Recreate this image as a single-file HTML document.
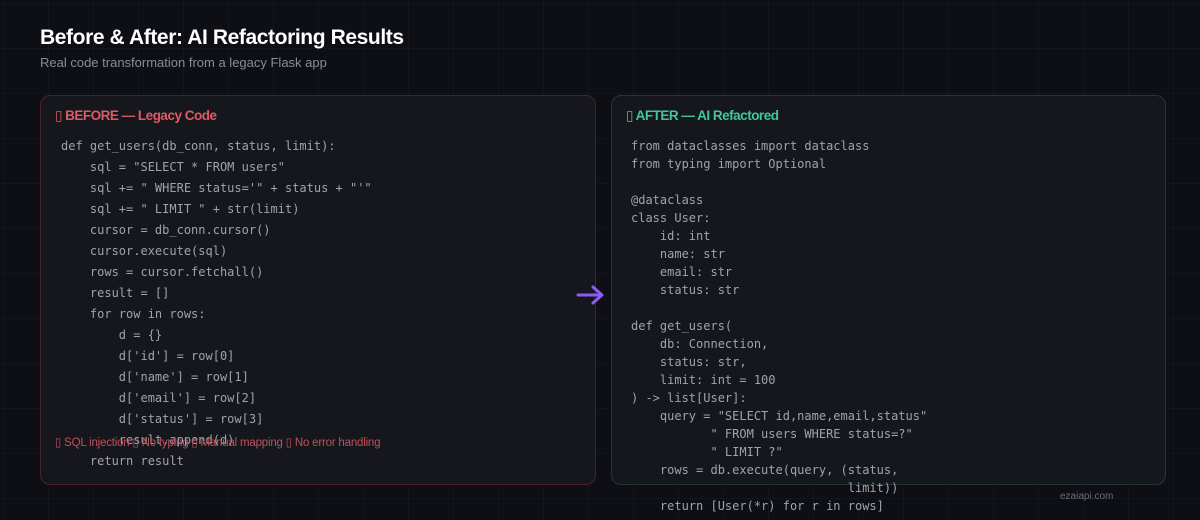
<!DOCTYPE html>
<html><head><meta charset="utf-8"><style>
*{margin:0;padding:0;box-sizing:border-box}
body{width:1200px;height:520px;overflow:hidden;background:#0e0f15;position:relative;font-family:"Liberation Sans","DejaVu Sans",sans-serif;
background-image:linear-gradient(rgba(255,255,255,0.025) 1px,transparent 1px),linear-gradient(90deg,rgba(255,255,255,0.025) 1px,transparent 1px);background-size:45px 45px;background-position:3px 3px}
h1{position:absolute;left:40px;top:26px;font-size:21px;font-weight:bold;color:#fff;letter-spacing:-0.4px}
.sub{position:absolute;left:40px;top:55px;font-size:13px;color:#8a8d96}
.card{position:absolute;top:95px;height:390px;border-radius:10px;background:#16171d;overflow:visible}
.l{left:40px;width:556px;border:1px solid #4a2228}
.r{left:611px;width:555px;border:1px solid #1f3a33}
.t{position:absolute;left:14px;top:12px;font-size:13.5px;font-weight:bold;letter-spacing:-0.5px}
pre{position:absolute;font-family:"DejaVu Sans Mono","Liberation Mono",monospace;font-size:12px;color:#a0a3a9}
.l pre{left:20px;top:40px;line-height:21px}
.r pre{left:19px;top:41px;line-height:18px}
.iss{position:absolute;left:14px;top:339px;font-size:11.5px;color:#c0505a;letter-spacing:-0.2px}
.arrow{position:absolute;left:576px;top:284px}
.wm{position:absolute;left:1060px;top:491px;font-size:10px;color:#6a6d75}
</style></head><body>
<h1>Before &amp; After: AI Refactoring Results</h1>
<div class="sub">Real code transformation from a legacy Flask app</div>
<div class="card l"><div class="t" style="color:#e05a63">▯ BEFORE — Legacy Code</div>
<pre>def get_users(db_conn, status, limit):
    sql = "SELECT * FROM users"
    sql += " WHERE status='" + status + "'"
    sql += " LIMIT " + str(limit)
    cursor = db_conn.cursor()
    cursor.execute(sql)
    rows = cursor.fetchall()
    result = []
    for row in rows:
        d = {}
        d['id'] = row[0]
        d['name'] = row[1]
        d['email'] = row[2]
        d['status'] = row[3]
        result.append(d)
    return result</pre>
<div class="iss">▯ SQL injection ▯ No typing ▯ Manual mapping ▯ No error handling</div>
</div>
<svg class="arrow" width="30" height="22" viewBox="0 0 30 22"><path d="M2 11H25M17 3L26 11L17 19" fill="none" stroke="#8b5cf6" stroke-width="3" stroke-linecap="round" stroke-linejoin="round"/></svg>
<div class="card r"><div class="t" style="color:#3ec99a">▯ AFTER — AI Refactored</div>
<pre>from dataclasses import dataclass
from typing import Optional

@dataclass
class User:
    id: int
    name: str
    email: str
    status: str

def get_users(
    db: Connection,
    status: str,
    limit: int = 100
) -> list[User]:
    query = "SELECT id,name,email,status"
           " FROM users WHERE status=?"
           " LIMIT ?"
    rows = db.execute(query, (status,
                              limit))
    return [User(*r) for r in rows]</pre>
</div>
<div class="wm">ezaiapi.com</div>
</body></html>
